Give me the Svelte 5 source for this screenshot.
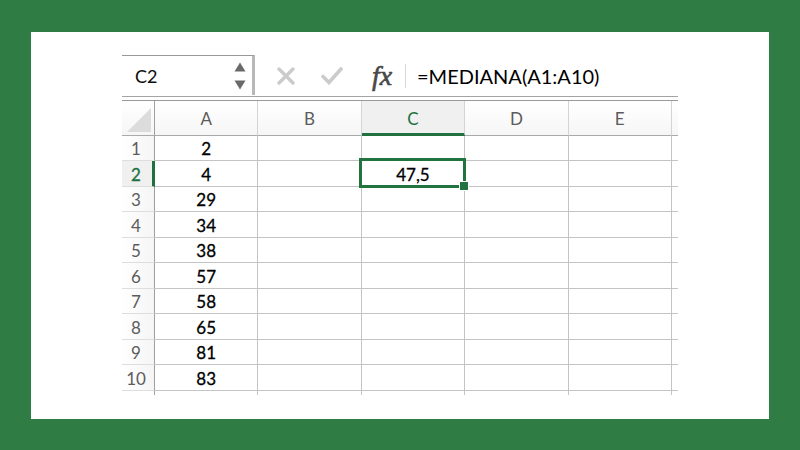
<script>
  const columns = ['A', 'B', 'C', 'D', 'E'];
  const values = [2, 4, 29, 34, 38, 57, 58, 65, 81, 83];
  const active = { column: 'C', row: 2 };

  let name = $state('C2');
  let formula = $state('=MEDIANA(A1:A10)');

  function cell(column, row) {
    if (column === 'A') return values[row - 1];
    if (column === active.column && row === active.row) return '47,5';
    return '';
  }

  function move(step) {
    const row = Math.min(10, Math.max(1, Number(name.slice(1)) + step));
    name = 'C' + row;
  }
</script>

<main>
  <section class="panel">
    <div class="bar">
      <div class="namebox">
        <input class="name" aria-label="Cell name" bind:value={name} />
        <div class="steps">
          <button aria-label="Previous cell" onclick={() => move(-1)}>
            <svg width="12" height="10" viewBox="0 0 12 10"><path d="M6 0.5 11.5 9.5H0.5Z" fill="#6a6a6a" /></svg>
          </button>
          <button aria-label="Next cell" onclick={() => move(1)}>
            <svg width="12" height="10" viewBox="0 0 12 10"><path d="M6 9.5 11.5 0.5H0.5Z" fill="#6a6a6a" /></svg>
          </button>
        </div>
      </div>
      <div class="tools">
        <button aria-label="Cancel">
          <svg width="18" height="18" viewBox="0 0 18 18"><path d="M2 2 16 16M16 2 2 16" fill="none" stroke="#cbcbcb" stroke-width="3.4" stroke-linecap="round" /></svg>
        </button>
        <button aria-label="Enter">
          <svg width="22" height="18" viewBox="0 0 22 18"><path d="M2 9.5 8 15.5 20 2" fill="none" stroke="#cbcbcb" stroke-width="3.6" stroke-linecap="round" /></svg>
        </button>
        <button class="fx" aria-label="Insert function">fx</button>
      </div>
      <input class="formula" aria-label="Formula" bind:value={formula} />
    </div>

    <table>
      <colgroup>
        <col class="numbers" />
        {#each columns as column (column)}<col />{/each}
        <col class="rest" />
      </colgroup>
      <thead>
        <tr>
          <th class="corner" aria-label="Select all">
            <svg width="24" height="24" viewBox="0 0 24 24"><path d="M24 0V24H0Z" fill="#dcdcdc" /></svg>
          </th>
          {#each columns as column (column)}
            <th scope="col" class:current={column === active.column}>{column}</th>
          {/each}
          <td></td>
        </tr>
      </thead>
      <tbody>
        {#each values as _, i (i)}
          <tr>
            <th scope="row" class:current={i + 1 === active.row}>{i + 1}</th>
            {#each columns as column (column)}
              <td class:selected={column === active.column && i + 1 === active.row}>{cell(column, i + 1)}</td>
            {/each}
            <td></td>
          </tr>
        {/each}
      </tbody>
      <tfoot>
        <tr>
          <td></td>
          {#each columns as column (column)}<td></td>{/each}
          <td></td>
        </tr>
      </tfoot>
    </table>
  </section>
</main>

<style>
  :global(body) {
    margin: 0;
    background: #2f7d45;
  }

  main {
    box-sizing: border-box;
    min-height: 100vh;
    padding: 32px 31px 31px;
    display: grid;
    font-family: Lato, Carlito, sans-serif;
    font-size: 17px;
    color: #0c0c0c;
  }

  .panel {
    background: #fff;
    padding: 23px 91px 20px;
  }

  button {
    display: flex;
    padding: 0;
    border: 0;
    background: none;
  }

  input {
    box-sizing: border-box;
    min-width: 0;
    padding: 0;
    border: 0;
    outline: 0;
    background: none;
    font: inherit;
    color: inherit;
  }

  .bar {
    display: flex;
    align-items: center;
    height: 41px;
    border-bottom: 1px solid #a4a4a4;
  }

  .namebox {
    box-sizing: border-box;
    display: flex;
    align-items: center;
    justify-content: space-between;
    width: 133px;
    height: 40px;
    align-self: flex-start;
    padding: 0 6px 0 13px;
    border-top: 1px solid #999;
    border-right: 3px solid #b8b8b8;
  }

  .name {
    width: 80px;
    font-size: 18px;
  }

  .steps {
    display: grid;
    gap: 8px;
  }

  .tools {
    display: flex;
    align-items: center;
    gap: 26px;
    height: 24px;
    margin-left: 22px;
    padding-right: 12px;
    border-right: 1px solid #d8d8d8;
  }

  .fx {
    box-sizing: border-box;
    width: 24px;
    padding-left: 3px;
    font: italic 28px/28px "Liberation Serif", serif;
    color: #484848;
    -webkit-text-stroke: 0.6px #484848;
  }

  .formula {
    flex: 1;
    margin-left: 11px;
    font-size: 20px;
    color: #000;
  }

  table {
    width: 100%;
    margin-top: 3px;
    table-layout: fixed;
    border-collapse: separate;
    border-spacing: 0;
    border-top: 1px solid #999;
  }

  .numbers {
    width: 33px;
  }

  .rest {
    width: 6px;
  }

  th,
  td {
    box-sizing: border-box;
    height: 25px;
    padding: 2px 0 0;
    border-right: 1px solid #c4c4c4;
    border-bottom: 1px solid #c4c4c4;
    line-height: 20px;
    text-align: center;
    font-weight: 400;
  }

  tr > :last-child {
    border-right: 0;
  }

  tbody tr:nth-child(even) > * {
    height: 26px;
  }

  tbody td {
    color: #000;
    -webkit-text-stroke: 0.3px #000;
  }

  th {
    color: #5c5c5c;
  }

  thead th,
  thead td {
    height: 35px;
    border-bottom-color: #aaa;
    background: linear-gradient(#fff, #f6f6f6);
  }

  thead th {
    border-right-color: #d4d4d4;
  }

  thead th.current {
    border-bottom: 3px solid #21703f;
    background: #f0f0f0;
    color: #21703f;
    padding-top: 4px;
  }

  .corner svg {
    display: block;
    margin: 2px 3px 0 auto;
  }

  thead .corner,
  tbody th {
    border-right-color: #a0a0a0;
  }

  tbody th {
    padding-right: 4px;
    border-bottom-color: #dedede;
    background: linear-gradient(90deg, #fff, #f5f5f5);
  }

  tbody th.current {
    padding-right: 2px;
    border-right: 3px solid #21703f;
    background: #f0f0f0;
    color: #21703f;
    -webkit-text-stroke: 0.3px #21703f;
  }

  .selected {
    position: relative;
  }

  .selected::before {
    content: '';
    position: absolute;
    inset: -3px -2px -2px -3px;
    border: 3px solid #21733f;
  }

  .selected::after {
    content: '';
    position: absolute;
    right: -5px;
    bottom: -5px;
    width: 8px;
    height: 8px;
    border: 1px solid #fff;
    background: #21733f;
  }

  tfoot td {
    height: 4px;
    padding: 0;
    border-bottom: 0;
  }

  tfoot td:first-child {
    border-right-color: #a0a0a0;
  }
</style>
